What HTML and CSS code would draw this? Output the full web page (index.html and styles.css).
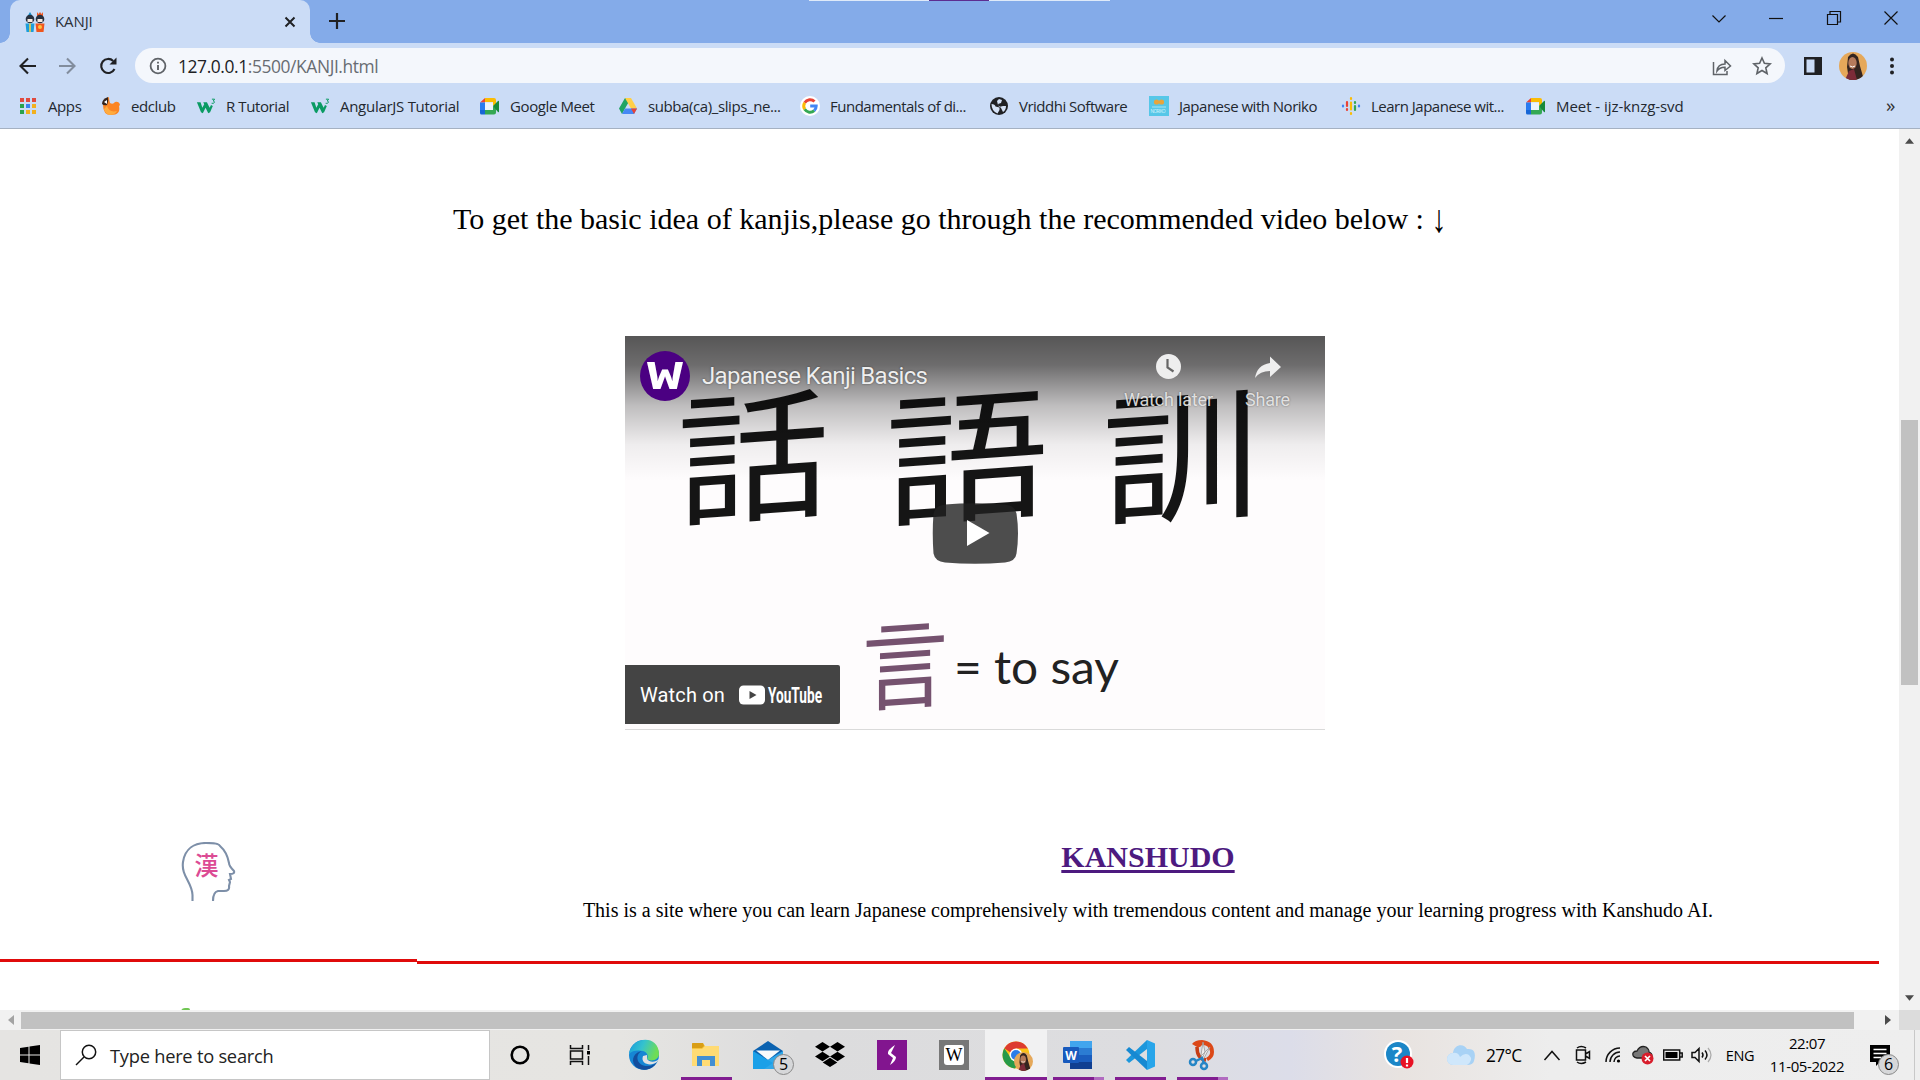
FILE: index.html
```html
<!DOCTYPE html>
<html lang="en">
<head>
<meta charset="utf-8">
<title>KANJI</title>
<link rel="stylesheet" href="styles.css">
</head>
<body>
<svg class="defs" width="0" height="0" aria-hidden="true">
  <defs>
    <symbol id="w3" viewBox="0 0 22 20"><path d="M1 6h4l2 6 2-4-1-2h4l3 6 1.500-3 2 1-3 7-2 1-3-6-3 6-2-1z" fill="#0a9b63"/><path d="M17.500 2.500h3l-1.500 2c2 .3 2 3-1.800 2.500" fill="none" stroke="#0a9b63" stroke-width="1.100"/></symbol>
    <symbol id="meet" viewBox="0 0 20 20"><path d="M5 2h9a2 2 0 0 1 2 2v4l-3 2V6H5z" fill="#fbbc04"/><path d="M5 2v4.500H0z" fill="#ea4335"/><path d="M0 6.500h5V14H0z" fill="#2a7bf0"/><path d="M0 14h5v4.500H1.500A1.500 1.500 0 0 1 0 17z" fill="#1766d6"/><path d="M5 14h8v-4l3 2v4.500a2 2 0 0 1-2 2H5z" fill="#34a853"/><path d="M5 6.500h8V14H5z" fill="#edf3fc"/><path d="m13 10 5-5q1-.7 1 .5v10q0 1.200-1 .5z" fill="#18893b"/></symbol>
    <symbol id="person" viewBox="0 0 28 28"><clipPath id="round"><circle cx="14" cy="14" r="14"/></clipPath><g clip-path="url(#round)"><path d="M0 0h28v28H0z" fill="#e5a85a"/><path d="M9 5q5-7 10 0l2 9 4 14H10L8 15z" fill="#33241f"/><ellipse cx="13.500" cy="11" rx="4.200" ry="6" fill="#b47a5b"/><path d="M6 28l4-9 5-2 3 11z" fill="#7c2b38"/><path d="M11 14q2.500 2 5 0" stroke="#fff" fill="none"/></g></symbol>
  </defs>
</svg>
<div class="screen">
  <header class="browser">
    <div class="tabstrip">
      <div class="tab">
        <svg class="favicon" viewBox="0 0 20 20"><path d="M5 0l3 5H2z" fill="#178fca"/><circle cx="5" cy="7" r="4.300" fill="#27303f"/><path d="M2.500 7h5v3h-5z" fill="#f5e9df"/><path d="M.5 11.500h9L8.500 20h-7z" fill="#1c9edb"/><path d="M4.200 11.500h1.600V20H4.200z" fill="#f1d04b"/><path d="M12 0l1.500 2L15 0l1.500 2L18 0v4h-6z" fill="#ef5a24"/><circle cx="15" cy="7" r="4.300" fill="#27303f"/><path d="M12.500 7h5v3h-5z" fill="#f5e9df"/><path d="M10.500 11.500h9l-1 8.500h-7z" fill="#f0561d"/><circle cx="15" cy="15" r="2" fill="#ffc13d"/></svg>
        <span class="tab-title">KANJI</span>
        <svg class="tab-close" viewBox="0 0 12 12"><path d="M1.500 1.500l9 9m0-9l-9 9" stroke="#202124" stroke-width="2"/></svg>
      </div>
      <svg class="plus" viewBox="0 0 16 16"><path d="M8 0v16M0 8h16" stroke="#202124" stroke-width="2.200"/></svg>
      <div class="snap"><i></i></div>
      <div class="window-buttons">
        <svg viewBox="0 0 16 16"><path d="M1.500 5.500L8 12l6.500-6.500" class="win"/></svg>
        <svg viewBox="0 0 16 16"><path d="M1 8.500h14" class="win"/></svg>
        <svg viewBox="0 0 16 16"><path d="M1.500 4.500h10v10h-10zM4 4V1.500h10.500V12H12" class="win"/></svg>
        <svg viewBox="0 0 16 16"><path d="M1.500 1.500l13 13m0-13l-13 13" class="win"/></svg>
      </div>
    </div>
    <div class="toolbar">
      <svg class="nav" viewBox="0 0 20 20"><path d="M18 10H3m7-7.500L2.500 10l7.500 7.500" class="arrow"/></svg>
      <svg class="nav dim" viewBox="0 0 20 20"><path d="M1 10h15M9 2.500l7.500 7.500-7.500 7.500" class="arrow"/></svg>
      <svg class="nav" viewBox="0 0 20 20"><path d="M16.500 13a7 7 0 1 1-1.300-8" class="arrow"/><path d="M18.500 1.500v7h-7z" fill="#202124"/></svg>
      <div class="address">
        <svg class="info" viewBox="0 0 18 18"><circle cx="9" cy="9" r="7.400" fill="none" stroke="#5f6368" stroke-width="1.800"/><path d="M9 8v5M9 4.800v1.800" stroke="#5f6368" stroke-width="1.900"/></svg>
        <span class="url">127.0.0.1<em>:5500/KANJI.html</em></span>
        <svg class="act share" viewBox="0 0 20 20"><path d="M1.500 6v12.500H15V15M5 15c.5-5 4-7 8-7V4.500L18.500 10 13 14.500v-3.300c-4-.2-6 1-8 3.800z" fill="none" stroke="#5f6368" stroke-width="1.500"/></svg>
        <svg class="act" viewBox="0 0 20 20"><path d="M10 2l2.400 5.300 5.800.6-4.400 3.900 1.300 5.700-5.100-3-5.100 3 1.300-5.700L1.800 7.900l5.800-.6z" fill="none" stroke="#5f6368" stroke-width="1.600"/></svg>
      </div>
      <svg class="side" viewBox="0 0 18 18"><path d="M0 0h18v18H0zM2.500 2.500v13h8v-13z" fill="#202124" fill-rule="evenodd"/></svg>
      <svg class="profile"><use href="#person"/></svg>
      <svg class="menu" viewBox="0 0 4 18"><circle cx="2" cy="2.500" r="2"/><circle cx="2" cy="9" r="2"/><circle cx="2" cy="15.500" r="2"/></svg>
    </div>
    <nav class="bookmarks">
      <a><svg viewBox="0 0 20 20"><path d="M2 2h4v4H2zM8 2h4v4H8zM14 2h4v4h-4z" fill="#e04a3f"/><path d="M2 8h4v4H2z" fill="#2ba24c"/><path d="M8 8h4v4H8z" fill="#3b82f0"/><path d="M14 8h4v4h-4z" fill="#f2b01e"/><path d="M2 14h4v4H2z" fill="#2ba24c"/><path d="M8 14h4v4H8zM14 14h4v4h-4z" fill="#f2b01e"/></svg>Apps</a>
      <a><svg viewBox="0 0 20 20"><path d="M2 9q1-6 6-8 0 3 1 6 3 2 5-1 4-1 5 3l-1 1q2 9-8 9Q2 19 2 9z" fill="#fb8524"/><path d="M6 10q2 7 10 5-2 4-7 4-5-1-6-6z" fill="#ffab3e"/><path d="M1 8q0-5 6-7 1 4-1 8-3 1-5-1z" fill="#35241c"/><path d="M3 6l3-2v4z" fill="#fff"/></svg>edclub</a>
      <a><svg viewBox="0 0 22 20"><use href="#w3"/></svg>R Tutorial</a>
      <a class="loose"><svg viewBox="0 0 22 20"><use href="#w3"/></svg>AngularJS Tutorial</a>
      <a><svg viewBox="0 0 20 20"><use href="#meet"/></svg>Google Meet</a>
      <a><svg viewBox="0 0 20 20"><path d="M7 2h6L7 12.500 4 18 1 12.500z" fill="#1fa463"/><path d="M7 2h6l6 10.500h-6z" fill="#ffcf48"/><path d="M7 12.500h12L16 18H4z" fill="#4688f4"/><path d="M13 12.500h6L16 18z" fill="#ea4335"/></svg>subba(ca)_slips_ne...</a>
      <a class="tight"><svg viewBox="0 0 20 20"><circle cx="10" cy="10" r="10" fill="#fff"/><g fill="none" stroke-width="3"><path d="M14.500 5.500A6.300 6.300 0 0 0 4.700 6.700" stroke="#ea4335"/><path d="M4.700 6.700a6.300 6.300 0 0 0 0 6.600" stroke="#fbbc05"/><path d="M4.700 13.300a6.300 6.300 0 0 0 9.500 1.300" stroke="#34a853"/><path d="M14.200 14.600q2-1.700 2-4.600h-6" stroke="#4285f4"/></g></svg>Fundamentals of di...</a>
      <a class="tight"><svg viewBox="0 0 20 20"><circle cx="10" cy="10" r="9" fill="#202124"/><path d="M2.500 8q3.500 0 4 2.500l4 1v2.500l-2 3.500q-6-2.500-6-9.500zM10 3l3 1-1 3-3 1 1 3 4-1 3 0q0 4-3 6l-2-4-3-3-1-4z" fill="#d5e2f6"/></svg>Vriddhi Software</a>
      <a class="tight"><svg viewBox="0 0 20 20"><path d="M0 0h20v20H0z" fill="#56c7e8"/><circle cx="7.500" cy="6" r="2.600" fill="#e8a53a"/><circle cx="12.500" cy="6" r="2.600" fill="#e8a53a"/><path d="M3 11h14" stroke="#a9e4f4"/><text x="1.500" y="17" class="tiny">NORIKO</text></svg>Japanese with Noriko</a>
      <a class="tight"><svg viewBox="0 0 20 20"><g stroke-width="2.200" stroke-linecap="round"><path d="M2 9.500v1M18 9.500v1" stroke="#4285f4"/><path d="M6 6v4M6 13v1" stroke="#ea4335"/><path d="M10 2v1M10 6.500v7M10 17v1" stroke="#fbbc04"/><path d="M14 6v1M14 10v4" stroke="#34a853"/></g></svg>Learn Japanese wit...</a>
      <a class="wide"><svg viewBox="0 0 20 20"><use href="#meet"/></svg>Meet - ijz-knzg-svd</a>
      <b>»</b>
    </nav>
  </header>

  <div class="viewport">
    <main class="page">
      <p class="intro">To get the basic idea of kanjis,please go through the recommended video below : <span>↓</span></p>
      <div class="player">
        <svg class="still" viewBox="0 0 700 394">
          <defs><linearGradient id="shade" x1="0" y1="0" x2="0" y2="1"><stop offset="0" stop-color="#000" stop-opacity=".66"/><stop offset=".2" stop-color="#000" stop-opacity=".57"/><stop offset=".48" stop-color="#000" stop-opacity=".25"/><stop offset=".75" stop-color="#000" stop-opacity=".06"/><stop offset="1" stop-color="#000" stop-opacity="0"/></linearGradient></defs>
          <rect width="700" height="394" fill="#fefcfd"/>
          <g class="kanji">
            <text transform="translate(128 120) skewY(-4)" x="-76" y="54" textLength="152" lengthAdjust="spacingAndGlyphs">話</text>
            <text transform="translate(342 120) skewY(-4)" x="-82" y="54" textLength="164" lengthAdjust="spacingAndGlyphs">語</text>
            <text transform="translate(556 120) skewY(-4)" x="-79" y="54" textLength="158" lengthAdjust="spacingAndGlyphs">訓</text>
          </g>
          <rect width="700" height="145" fill="url(#shade)"/>
          <text class="root" transform="translate(280 330) skewY(-4)" x="-43" y="35" textLength="86" lengthAdjust="spacingAndGlyphs">言</text>
          <text class="say" x="329" y="348" textLength="165" lengthAdjust="spacingAndGlyphs">= to say</text>
          <path d="M0 393.500h700" stroke="#dadada"/>
          <circle cx="40" cy="40" r="25" fill="#4b0082"/>
          <text class="channel" x="22" y="52.500" textLength="36" lengthAdjust="spacingAndGlyphs">W</text>
          <g fill="#eee"><circle cx="543.500" cy="30.500" r="12.500"/><path d="M645 20.500L656 31l-11 10v-6q-10 0-15 7 2-13 15-15z"/></g>
          <path d="M542.500 23v8.500l6 4" fill="none" stroke="#666" stroke-width="2.200"/>
          <g class="ytlabel">
            <text class="yttitle" x="77" y="48" textLength="226">Japanese Kanji Basics</text>
            <text x="499" y="69.500" textLength="89">Watch later</text>
            <text x="620" y="69.500" textLength="45">Share</text>
          </g>
          <path d="M320 168.500q30-2.500 60 0 10 1 11.500 9 3 20 0 40-1 8-11.500 9-30 2.500-60 0-10-1-11.500-9-1.500-20 0-40 1.500-8 11.500-9z" fill="#212121" fill-opacity=".8"/>
          <path d="M342 184l22.500 13L342 210z" fill="#fff"/>
        </svg>
        <div class="watch-on"><span>Watch on</span>
          <svg viewBox="0 0 84 24"><rect x="0" y="2.500" width="26" height="19" rx="4.500" fill="#fff"/><path d="M10.500 8v8l7-4z" fill="#444"/><text x="29" y="20" textLength="54" lengthAdjust="spacingAndGlyphs">YouTube</text></svg>
        </div>
      </div>
      <div class="site">
        <div class="site-logo">
          <svg viewBox="0 0 56 60"><path d="M11.500 59V53C11 40 0 34 2 20 4 6 14 1 25 1q13 0 14 3 7 6 9 17 0 3 5 8 1 3-4 3l1 5-2 1 1 2-1 4q1 5-5 5h-6q-5 1-5 10" fill="none" stroke="#7d8fa8" stroke-width="2.100"/><text x="13.500" y="33" textLength="24" lengthAdjust="spacingAndGlyphs">漢</text></svg>
        </div>
        <div class="site-info">
          <h2>KANSHUDO</h2>
          <p>This is a site where you can learn Japanese comprehensively with tremendous content and manage your learning progress with Kanshudo AI.</p>
        </div>
      </div>
      <div class="next-site"><i></i></div>
    </main>
    <div class="vscroll"><svg viewBox="0 0 10 6"><path d="M0 6l5-6 5 6z"/></svg><i></i><svg viewBox="0 0 10 6"><path d="M0 0h10L5 6z"/></svg></div>
    <div class="hscroll"><svg class="faint" viewBox="0 0 6 10"><path d="M6 0v10L0 5z"/></svg><i></i><svg viewBox="0 0 6 10"><path d="M0 0v10l6-5z"/></svg></div>
    <div class="corner"></div>
  </div>

  <footer class="taskbar">
    <div class="start"><svg width="20" height="20" viewBox="0 0 20 20"><path d="M0 3l8.500-1.200v7.700H0zM9.500 1.600L20 0v9.500H9.500zM0 10.500h8.500v7.700L0 17zM9.500 10.500H20V20L9.500 18.400z"/></svg></div>
    <div class="search"><svg width="22" height="22" viewBox="0 0 22 22"><circle cx="14" cy="8" r="6.700" class="line"/><path d="M9 13L1 21" class="line"/></svg><span>Type here to search</span></div>
    <div class="small"><svg width="20" height="20" viewBox="0 0 20 20"><circle cx="10" cy="10" r="8.300" fill="none" stroke="#000" stroke-width="2.600"/></svg></div>
    <div class="small"><svg width="22" height="20" viewBox="0 0 22 20"><path d="M1.500 0v3.500h12V0M1.500 20v-3.500h12V20M1.500 6h12v8h-12zM19.500 0v5M19.500 11v9" class="line"/><path d="M18 6h3v3.500h-3z"/></svg></div>
    <div class="apps">
      <div><svg viewBox="0 0 30 30"><defs><linearGradient id="edge" x1="0" x2="1" y2=".3"><stop stop-color="#169bdc"/><stop offset=".5" stop-color="#35c2ce"/><stop offset="1" stop-color="#6fdd55"/></linearGradient></defs><circle cx="15" cy="15" r="15" fill="#1686d4"/><path d="M0 14C2-4 30-6 30 14c0 6-8 8-12 5 2-3 0-7-4-8S3 10 0 14z" fill="url(#edge)"/><path d="M13 11c-8 4-5 15 5 15 5 0 8-2 10-4-5 9-16 10-22 4-5-7 0-14 7-15z" fill="#134e9d"/><path d="M18 19c3 4 9 3 12 0l-2 3c-6 5-17 2-14-6l4-1z" fill="#e0e1e2"/></svg></div>
      <div class="on"><svg viewBox="0 0 30 30"><path d="M1 4q0-1 1-1h10l2 3h14v20H1z" fill="#f6c43c"/><path d="M1 4q0-1 1-1h10l1 3-2 2H1z" fill="#d99e16"/><path d="M1 9h10l3-3h14v20H1z" fill="#ffdb74"/><path d="M6 26V16h18v10h-5v-6h-8v6z" fill="#438fd2"/></svg></div>
      <div><svg viewBox="0 0 30 30"><path d="M0 11L15 1l15 10v18H0z" fill="#0b62b0"/><path d="M3 10.500h24L15 20z" fill="#f8fafb"/><path d="M30 11v18H0z" fill="#2fa8ea"/><path d="M0 11l20 12-9 6H0z" fill="#1aa0e8"/></svg><em>5</em></div>
      <div><svg viewBox="0 0 30 30"><path d="M7.500 2L15 6.800 7.500 11.600 0 6.800zM22.500 2L30 6.800l-7.500 4.800L15 6.800zM7.500 11.700L15 16.500l-7.500 4.800L0 16.500zM22.500 11.700l7.500 4.800-7.500 4.800-7.500-4.800zM7.700 22.400L15 17.700l7.300 4.700L15 27z"/></svg></div>
      <div><svg viewBox="0 0 30 30"><path d="M0 0h30v30H0z" fill="#82158f"/><path d="M18 5q-8 5-7 9l5 4-3 7q6-4 6-8l-5-4z" fill="#fff"/></svg></div>
      <div><svg viewBox="0 0 30 30"><path d="M0 0h30v30H0z" fill="#777"/><rect x="5" y="5" width="20" height="20" rx="3" fill="#fff"/><text x="15" y="21" text-anchor="middle" class="wiki">W</text></svg></div>
      <div class="on current"><svg viewBox="0 0 30 30"><circle cx="15" cy="15" r="13.500" fill="#fbc116"/><path d="M3.300 8.300A13.500 13.500 0 0 0 14 28.500L19 20 10 18z" fill="#269a49"/><path d="M3.300 8.300a13.500 13.500 0 0 1 23.500.2H15l-4 5z" fill="#dd3b2f"/><circle cx="15" cy="15" r="6.500" fill="#fff"/><circle cx="15" cy="15" r="5" fill="#2c7de9"/><use href="#person" x="13" y="12" width="19" height="19"/></svg></div>
      <div class="on many"><svg viewBox="0 0 30 30"><path d="M7 1h22v28H7z" fill="#1a5dbe"/><path d="M7 1h22v7H7z" fill="#41a5ee"/><path d="M7 8h22v7H7z" fill="#2b7cd3"/><path d="M7 22h22v7H7z" fill="#103f91"/><rect y="7" width="16" height="16" rx="1" fill="#185abd"/><text x="8" y="19.500" text-anchor="middle" class="word">W</text></svg></div>
      <div class="on"><svg viewBox="0 0 30 30"><path d="M22 0v9L4 23l-3-3z" fill="#1c97dc"/><path d="M22 30v-9L4 7l-3 3z" fill="#1689d2"/><path d="M22 0l8 3.500v23L22 30z" fill="#28a5ea"/></svg></div>
      <div class="on many snip"><svg viewBox="0 0 30 30"><path d="M8 7q0 12 9 13" fill="none" stroke="#c63d16" stroke-width="3.500"/><path d="M3 4q3-4 10-4 12 1 12 12 0 6-6 9l-2-3q5-3 4-7-2-7-8-6-2 3-5 2z" fill="#dc4818"/><path d="M14 2l2 10-3 7-1-4zM21 7l-7 13-2-4z" fill="#eee" stroke="#999" stroke-width=".8"/><circle cx="4" cy="22" r="3" class="loop"/><circle cx="15" cy="26" r="3" class="loop"/><path d="M7 21l6-3 2 5" class="loop"/></svg></div>
    </div>
    <div class="tray">
      <div><svg width="30" height="30" viewBox="0 0 30 30"><circle cx="14" cy="14" r="14" fill="#fff"/><circle cx="14" cy="14" r="12" fill="#1b86c7"/><text x="13" y="22" text-anchor="middle" class="help">?</text><circle cx="23" cy="22" r="6.500" fill="#e81123"/><path d="M23 18v5M23 24.500v2" stroke="#fff" stroke-width="2.200"/></svg></div>
      <div class="weather"><svg width="28" height="22" viewBox="0 0 28 22"><path d="M6 21a6 6 0 0 1 0-12C7 0 17-1 20 5c8-1 9 5 7 12q-1 4-7 4z" fill="#a8d2f5"/><path d="M6 21a6 6 0 0 1 0-12q5-1 7 4 5-5 9-2 5 5-2 10z" fill="#cfe7fb"/></svg><span>27°C</span></div>
      <div><svg width="18" height="12" viewBox="0 0 18 12"><path d="M1.500 11L9 2.500l7.500 8.500" class="line"/></svg></div>
      <div><svg width="16" height="20" viewBox="0 0 16 20"><path d="M1.500 5h9v10h-9zM10.500 9l4-2.500v7l-4-2.500M2 3q4-3 9 0M2 17q4 3 9 0" class="line"/></svg></div>
      <div><svg width="18" height="18" viewBox="0 0 18 18"><path d="M2 16A14 14 0 0 1 16 2M6 16A10 10 0 0 1 16 6M10 16a6 6 0 0 1 6-6" class="line"/><circle cx="14.500" cy="15" r="1.600"/></svg></div>
      <div><svg width="22" height="20" viewBox="0 0 22 20"><path d="M5 13q-5-1-4-5 1-2 4-2 3-6 9-4 3 2 3 5 3 1 3 4t-3 2z" fill="#777" stroke="#222" stroke-width="1.300"/><circle cx="15.500" cy="13.500" r="6" fill="#d81e2c"/><path d="M13 11l5 5m0-5l-5 5" stroke="#fff" stroke-width="1.700"/></svg></div>
      <div><svg width="20" height="12" viewBox="0 0 20 12"><path d="M.7 1h16v10H.7zM17 4h2.200v4H17" class="line"/><path d="M2.500 3h12v6h-12z"/></svg></div>
      <div><svg width="22" height="18" viewBox="0 0 22 18"><path d="M1 6.500h3L8 2.500v13l-4-4H1zM11 6.500q2 2.500 0 5M14 4.500q4 4.500 0 9" class="line"/><path d="M17 2q6 7 0 14" fill="none" stroke="#aaa" stroke-width="1.200"/></svg></div>
      <div class="lang">ENG</div>
      <div class="clock"><span>22:07</span><span>11-05-2022</span></div>
      <div class="notes"><svg width="20" height="21" viewBox="0 0 20 21"><path d="M0 0h20v17H10l-4 4v-4H0z"/><path d="M3.500 4.500h13M3.500 8.500h13M3.500 12.500h8" stroke="#fff" stroke-width="1.500"/></svg><em>6</em></div>
    </div>
  </footer>
</div>
</body>
</html>
```

FILE: styles.css
```css
* { box-sizing: border-box; }
body { margin: 0; background: #fff; font-family: "Open Sans", "Noto Sans", sans-serif; }
.defs { position: absolute; }
.screen { width: 1920px; height: 1080px; overflow: hidden; display: flex; flex-direction: column; }
svg { display: block; flex: none; }

.browser { height: 129px; background: #cbdcf6; border-bottom: 1px solid #a5b1c2; flex: none; }
.tabstrip { height: 43px; background: #84abe9; display: flex; position: relative; padding-left: 10px; }
.tab { width: 300px; height: 43px; background: #cbdcf6; border-radius: 10px 10px 0 0; display: flex; align-items: center; padding: 0 14px 0 15px; position: relative; }
.tab::before, .tab::after { content: ""; position: absolute; bottom: 0; width: 10px; height: 10px; }
.tab::before { left: -10px; background: radial-gradient(circle at 0 0, #84abe9 9.500px, #cbdcf6 10px); }
.tab::after { right: -10px; background: radial-gradient(circle at 100% 0, #84abe9 9.500px, #cbdcf6 10px); }
.favicon { width: 20px; height: 20px; }
.tab-title { margin-left: 10px; font-size: 15px; letter-spacing: -.1px; color: #2b3038; line-height: 42px; height: 43px; }
.tab-close { width: 12px; height: 12px; margin-left: auto; }
.plus { width: 16px; height: 16px; margin: 13px 0 0 19px; }
.snap { position: absolute; left: 809px; top: 0; width: 301px; height: 1px; background: #dfeaf9; }
.snap i { display: block; width: 60px; height: 1px; margin-left: 120px; background: #5c2d91; }
.window-buttons { margin-left: auto; display: flex; gap: 41.300px; padding: 10px 21px 0 0; }
.window-buttons svg { width: 16px; height: 16px; }
.win { fill: none; stroke: #111; stroke-width: 1.200; }

.toolbar { height: 45px; display: flex; align-items: center; padding-left: 18px; }
.nav { width: 20px; height: 20px; margin-right: 20px; }
.nav:nth-of-type(3) { margin-right: 17px; }
.dim { opacity: .42; }
.arrow { fill: none; stroke: #202124; stroke-width: 2.100; }
.address { width: 1650px; height: 35px; border-radius: 18px; background: #f4f7fc; display: flex; align-items: center; padding: 0 13px 0 14px; }
.info { width: 18px; height: 18px; }
.url { margin: 0 auto 0 11px; font-size: 17.400px; letter-spacing: -.4px; color: #202124; }
.url em { font-style: normal; color: #686c72; }
.act { width: 20px; height: 20px; }
.share { margin-right: 20px; }
.side { width: 18px; height: 18px; margin-left: 19px; }
.profile { width: 28px; height: 28px; margin-left: 17px; }
.menu { width: 4px; height: 18px; margin-left: 23px; fill: #202124; }

.bookmarks { height: 36px; display: grid; grid-template-columns: 83px 95px 114px 170px 138px 182px 189px 160px 192px 185px 360px 20px; align-items: center; padding-left: 18px; }
.bookmarks a { display: flex; align-items: center; gap: 10px; font-size: 15px; letter-spacing: -.4px; color: #23282f; white-space: nowrap; line-height: 20px; }
.bookmarks .tight { letter-spacing: -.5px; }
.bookmarks .loose { letter-spacing: -.28px; }
.bookmarks .wide { letter-spacing: -.05px; }
.bookmarks svg { width: 20px; height: 20px; }
.bookmarks b { font-weight: 400; font-size: 19px; color: #333; line-height: 20px; margin-top: -3px; }
.tiny { font-size: 4.600px; fill: #d7f4fc; }

.viewport { height: 901px; display: grid; grid-template: 881px 20px / 1899px 21px; flex: none; }
.page { overflow: hidden; font-family: "Liberation Serif", serif; color: #000; }
.intro { margin: 72px 0 0 453px; font-size: 30px; line-height: 36px; white-space: nowrap; height: 135px; }
.intro span { display: inline-block; transform: scaleY(1.3); }
.player { width: 700px; height: 394px; margin-left: 625px; position: relative; }
.still { width: 700px; height: 394px; }
.kanji text { font: 400 142px "Noto Sans CJK JP", sans-serif; fill: #151515; }
.root { font: 400 97px "Noto Sans CJK JP", sans-serif; fill: #75526f; }
.say { font: 400 47px Lato, sans-serif; fill: #222; }
.channel { font: 700 41px "Liberation Mono", monospace; fill: #fff; }
.ytlabel text { font: 400 18px Roboto, sans-serif; fill: #eee; fill-opacity: .9; text-shadow: 0 0 2px rgba(0,0,0,.5); }
.ytlabel .yttitle { font-size: 24px; fill-opacity: 1; }
.watch-on { position: absolute; left: 0; top: 329px; width: 215px; height: 59px; background: #444; border-radius: 0 2px 2px 0; display: flex; align-items: center; padding-left: 15px; color: #fff; font: 400 20px Roboto, sans-serif; }
.watch-on span { width: 99px; letter-spacing: .15px; }
.watch-on svg { width: 84px; height: 24px; overflow: visible; }
.watch-on text { font: 700 21.500px Roboto, sans-serif; fill: #fff; }
.site { display: grid; grid-template-columns: 417px 1462px; margin-top: 88px; align-items: start; }
.site-logo { height: 144px; border-bottom: 3px solid #e00b0b; padding: 24px 0 0 181px; }
.site-logo svg { width: 56px; height: 60px; }
.site-logo text { font: 500 25px "Noto Sans CJK JP", sans-serif; fill: #dc4b94; }
.site-info { height: 146px; border-bottom: 3px solid #e00b0b; text-align: center; }
.site-info h2 { margin: 22px 0 0; font-size: 30px; line-height: 34px; color: #4d1a7f; text-decoration: underline; text-decoration-thickness: 3px; text-underline-offset: 3px; }
.site-info p { margin: 24px 0 0; font-size: 20px; line-height: 24px; white-space: nowrap; }
.next-site { padding: 44px 0 0 181px; }
.next-site i { display: block; width: 9px; height: 4px; background: #70c653; border-radius: 4px 2px 0 0; }
.vscroll { background: #f1f1f1; display: flex; flex-direction: column; align-items: center; padding: 9px 0; }
.vscroll svg { width: 9px; height: 6px; fill: #4b4b4b; }
.vscroll i { width: 17px; height: 265px; margin: 276px 0 auto; background: #c1c1c1; }
.hscroll { background: #f1f1f1; display: flex; align-items: center; padding: 0 8px 0 8px; }
.hscroll svg { width: 6px; height: 10px; fill: #4b4b4b; }
.hscroll .faint { fill: #a3a3a3; }
.hscroll i { width: 1833px; height: 17px; margin: 1px auto 0 7px; background: #c1c1c1; }
.corner { background: #dcdcdc; }

.taskbar { height: 50px; display: flex; background: linear-gradient(90deg, #e5e4e2 0, #e6e5e2 620px, #dcdcdd 800px, #dddde0 1150px, #dcdde9 1290px, #e8e3e0 1400px, #ededed 1550px, #eee 1920px); }
.taskbar > div, .tray > div, .apps > div { display: flex; align-items: center; justify-content: center; }
.taskbar em { font-style: normal; }
.line { fill: none; stroke: #111; stroke-width: 1.500; }
.start { width: 60px; }
.taskbar .search { width: 430px; background: #fff; border: 1px solid #c6c6c6; justify-content: flex-start; padding-left: 14px; font-size: 18.300px; letter-spacing: -.25px; color: #222; }
.search span { margin-left: 13px; }
.small { width: 60px; }
.apps { margin-left: 3px; }
.apps > div { width: 62px; height: 50px; position: relative; }
.apps svg { width: 30px; height: 30px; overflow: visible; }
.apps > .on::after { content: ""; position: absolute; left: 6px; bottom: 0; width: 51px; height: 3px; background: #811d91; }
.apps > .many::after { background: linear-gradient(90deg, #811d91 41px, #b16bc0 41px); }
.apps > .current { background: #f1f1f2; }
.apps > .current::after { left: 0; width: 62px; }
.apps > .snip { padding-left: 3px; }
.apps em, .notes em { position: absolute; left: 36px; top: 24px; width: 21px; height: 21px; border: 1px solid #888; border-radius: 50%; background: #d6d7d9; font-size: 16px; line-height: 19px; text-align: center; }
.wiki { font: 18px "Liberation Serif", serif; }
.word { font: 700 12px "Open Sans", sans-serif; fill: #fff; }
.loop { fill: none; stroke: #2585c6; stroke-width: 2.500; }
.help { font: 700 22px "Open Sans", sans-serif; fill: #fff; }
.taskbar > .tray { margin-left: auto; display: grid; grid-template-columns: 48px 113px 32px 30px 30px 29px 31px 28px 48px 88px 62px; align-items: stretch; margin-right: 5px; border-right: 1px solid #c8c8c8; }
.tray > .weather { justify-content: flex-start; padding-left: 24px; gap: 11px; font-size: 17.300px; letter-spacing: -.6px; }
.lang { font-size: 14.500px; letter-spacing: -.4px; }
.tray > .clock { flex-direction: column; font-size: 15px; letter-spacing: -.4px; line-height: 23px; padding-right: 2px; }
.notes { position: relative; }
.tray .notes { padding-right: 6px; }
.notes em { left: 26px; }
```
